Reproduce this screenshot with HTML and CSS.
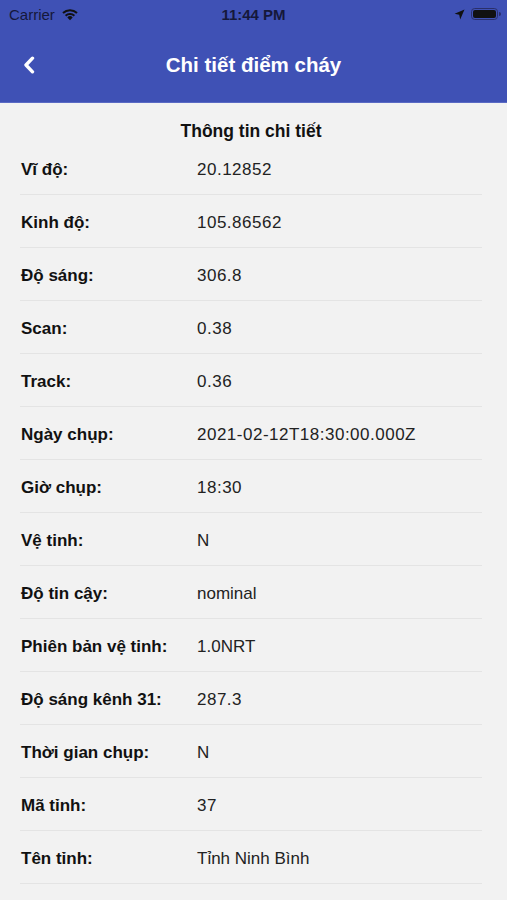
FILE: index.html
```html
<!DOCTYPE html>
<html lang="vi">
<head>
<meta charset="utf-8">
<title>Chi tiết điểm cháy</title>
<link rel="stylesheet" href="styles.css">
</head>
<body>
<header class="appbar">
  <div class="statusbar">
    <div class="sb-left">
      <span class="carrier">Carrier</span>
      <svg class="wifi" width="18" height="14" viewBox="0 0 18 14">
        <path d="M9 13.2 L6.3 10.4 A3.9 3.9 0 0 1 11.7 10.4 Z" fill="#111"/>
        <path d="M3.9 8 A7.4 7.4 0 0 1 14.1 8 L12.7 9.4 A5.4 5.4 0 0 0 5.3 9.4 Z" fill="#111"/>
        <path d="M1.3 5.3 A11.1 11.1 0 0 1 16.7 5.3 L15.3 6.7 A9.1 9.1 0 0 0 2.7 6.7 Z" fill="#111"/>
      </svg>
    </div>
    <span class="time">11:44 PM</span>
    <div class="sb-right">
      <svg class="loc" width="11" height="11" viewBox="0 0 11 11">
        <path d="M10.5 0.5 L0.6 4.8 L5.2 5.8 L6.2 10.4 Z" fill="#111"/>
      </svg>
      <svg class="battery" width="31" height="12" viewBox="0 0 31 12">
        <rect x="0.5" y="0.5" width="26" height="11" rx="3.2" fill="none" stroke="#2a2f6a" stroke-width="1"/>
        <rect x="2" y="2" width="23" height="8" rx="2" fill="#111"/>
        <path d="M28 4 A2 2 0 0 1 28 8 Z" fill="#2a2f6a"/>
      </svg>
    </div>
  </div>
  <nav class="navbar">
    <svg class="back" width="14" height="18" viewBox="0 0 14 18">
      <path d="M10.5 2.2 L4 9 L10.5 15.8" fill="none" stroke="#fff" stroke-width="3.4" stroke-linecap="round" stroke-linejoin="round"/>
    </svg>
    <h1 class="nav-title">Chi tiết điểm cháy</h1>
  </nav>
</header>

<main class="content">
  <h2 class="section-title">Thông tin chi tiết</h2>
  <dl class="details">
    <div class="row"><dt>Vĩ độ:</dt><dd class="num">20.12852</dd></div>
    <div class="row"><dt>Kinh độ:</dt><dd class="num">105.86562</dd></div>
    <div class="row"><dt>Độ sáng:</dt><dd class="num">306.8</dd></div>
    <div class="row"><dt>Scan:</dt><dd class="num">0.38</dd></div>
    <div class="row"><dt>Track:</dt><dd class="num">0.36</dd></div>
    <div class="row"><dt>Ngày chụp:</dt><dd class="num">2021-02-12T18:30:00.000Z</dd></div>
    <div class="row"><dt>Giờ chụp:</dt><dd class="num">18:30</dd></div>
    <div class="row"><dt>Vệ tinh:</dt><dd>N</dd></div>
    <div class="row"><dt>Độ tin cậy:</dt><dd>nominal</dd></div>
    <div class="row"><dt>Phiên bản vệ tinh:</dt><dd>1.0NRT</dd></div>
    <div class="row"><dt>Độ sáng kênh 31:</dt><dd class="num">287.3</dd></div>
    <div class="row"><dt>Thời gian chụp:</dt><dd>N</dd></div>
    <div class="row"><dt>Mã tỉnh:</dt><dd class="num">37</dd></div>
    <div class="row"><dt>Tên tỉnh:</dt><dd>Tỉnh Ninh Bình</dd></div>
  </dl>
</main>
</body>
</html>
```

FILE: styles.css
```css
* { box-sizing: border-box; }

html, body {
  margin: 0;
  padding: 0;
}

body {
  width: 507px;
  min-height: 900px;
  background: #f2f2f2;
  font-family: "Liberation Sans", Arial, sans-serif;
  color: #111;
  overflow: hidden;
}

.appbar {
  background: #3f51b5;
  height: 103px;
  display: flex;
  flex-direction: column;
  border-bottom: 1px solid #5a6ac4;
}

.statusbar {
  height: 28px;
  display: flex;
  align-items: center;
  justify-content: space-between;
  padding: 0 5px 0 9px;
  position: relative;
}

.sb-left {
  display: flex;
  align-items: center;
  gap: 6px;
}

.carrier {
  font-size: 15px;
  color: #15183a;
}

.wifi { margin-top: -1px; }

.time {
  position: absolute;
  left: 0;
  right: 0;
  text-align: center;
  font-size: 15px;
  font-weight: bold;
  color: #15183a;
  pointer-events: none;
}

.sb-right {
  display: flex;
  align-items: center;
  gap: 6px;
}

.navbar {
  flex: 1;
  display: flex;
  align-items: center;
  justify-content: center;
  position: relative;
}

.back {
  position: absolute;
  left: 22px;
  top: 28px;
}

.nav-title {
  margin: 0;
  font-size: 20.5px;
  font-weight: bold;
  color: #fff;
}

.content {
  padding: 0 25px 0 20px;
}

.section-title {
  margin: 0;
  padding-top: 17px;
  height: 39px;
  line-height: 22px;
  text-align: center;
  font-size: 17.5px;
  font-weight: bold;
  color: #111;
}

.details {
  margin: 0;
}

.row {
  display: grid;
  grid-template-columns: 177px 1fr;
  align-items: center;
  height: 53px;
  padding-top: 3px;
  border-bottom: 1px solid #e4e4e4;
}

.row dt {
  padding-left: 1px;
  font-size: 17px;
  font-weight: bold;
  color: #111;
}

.row dd {
  margin: 0;
  font-size: 17px;
  color: #222;
}

.row dd.num {
  letter-spacing: 0.5px;
}
```
